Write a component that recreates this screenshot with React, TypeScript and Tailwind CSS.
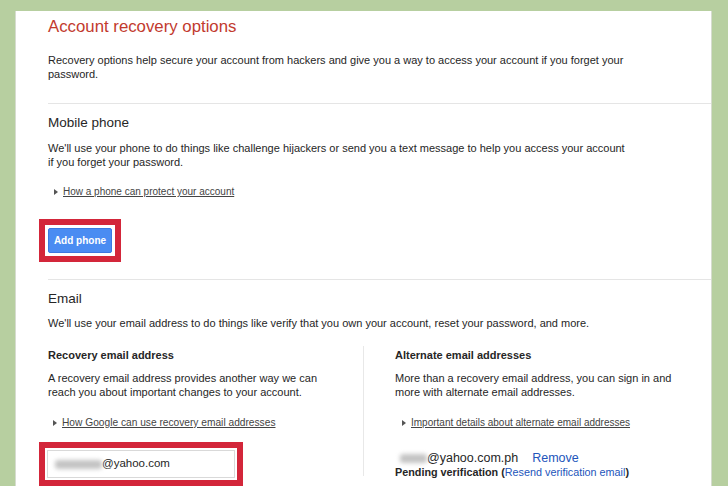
import React from "react";

const Tri = () => (
  <svg width="4" height="6" viewBox="0 0 4 6" className="mr-[5px] shrink-0">
    <path d="M0 0 L4 3 L0 6 Z" fill="#555" />
  </svg>
);

const Blur = ({ w }: { w: number }) => (
  <span
    className="inline-block h-[9px] rounded-[3px] bg-[#c4c4c4] blur-[2px] align-middle"
    style={{ width: w }}
  />
);

export default function App() {
  return (
    <div
      className="h-[486px] overflow-hidden bg-[#b7cfa0] pt-[11px] pl-[15px] pr-[16px]"
      style={{ fontFamily: '"Liberation Sans", Arial, sans-serif' }}
    >
      <div className="h-[480px] bg-white border-r border-l border-[#d6dccf] pl-[32px] pt-[6px] text-[#262626]">
        <h1 className="text-[16.8px] leading-[20px] text-[#c23a2e]">Account recovery options</h1>
        <p className="mt-[16px] text-[11px] leading-[14px]">
          Recovery options help secure your account from hackers and give you a way to access your account if you forget your
          <br />
          password.
        </p>
        <div className="mt-[22px] border-t border-[#e5e5e5]" />

        <h2 className="mt-[11px] text-[13.5px] leading-[16px]">Mobile phone</h2>
        <p className="mt-[10px] text-[11px] leading-[14px]">
          We'll use your phone to do things like challenge hijackers or send you a text message to help you access your account
          <br />
          if you forget your password.
        </p>
        <div className="mt-[16px] flex items-center pl-[6px] text-[10px] leading-[14px] text-[#444]">
          <Tri />
          <span className="underline">How a phone can protect your account</span>
        </div>
        <div className="mt-[20px] -ml-[9px] w-fit border-[6px] border-[#d3263a] bg-white p-[3px]">
          <button className="flex h-[25px] w-[64px] items-center justify-center rounded-[2px] border border-[#3b78e0] bg-[#4a8cf2] text-[10px] font-bold text-white">
            Add phone
          </button>
        </div>
        <div className="mt-[17px] border-t border-[#e5e5e5]" />

        <h2 className="mt-[11px] text-[13.5px] leading-[16px]">Email</h2>
        <p className="mt-[9px] text-[11px] leading-[14px]">
          We'll use your email address to do things like verify that you own your account, reset your password, and more.
        </p>

        <div className="mt-[16px] flex">
          <div className="w-[315px] pt-[2px]">
            <h3 className="text-[11px] font-bold leading-[14px]">Recovery email address</h3>
            <p className="mt-[9px] text-[11px] leading-[14px]">
              A recovery email address provides another way we can
              <br />
              reach you about important changes to your account.
            </p>
            <div className="mt-[17px] flex items-center pl-[5px] text-[10.2px] leading-[14px] text-[#444]">
              <Tri />
              <span className="underline">How Google can use recovery email addresses</span>
            </div>
            <div className="mt-[12px] -ml-[9px] w-fit border-[6px] border-[#d3263a] bg-white p-[2px]">
              <div className="flex h-[28px] w-[188px] items-center border border-[#d9d9d9] pl-[7px] text-[11.5px]">
                <Blur w={47} />
                <span>@yahoo.com</span>
              </div>
            </div>
          </div>
          <div className="h-[130px] border-l border-[#e8e8e8]" />
          <div className="pl-[31px] pt-[2px]">
            <h3 className="text-[11px] font-bold leading-[14px]">Alternate email addresses</h3>
            <p className="mt-[9px] text-[11px] leading-[14px]">
              More than a recovery email address, you can sign in and
              <br />
              more with alternate email addresses.
            </p>
            <div className="mt-[17px] flex items-center pl-[7px] text-[10px] leading-[14px] text-[#444]">
              <Tri />
              <span className="underline">Important details about alternate email addresses</span>
            </div>
            <div className="mt-[21px] flex items-center pl-[5px] text-[12.5px] leading-[14px]">
              <Blur w={27} />
              <span>@yahoo.com.ph</span>
              <span className="ml-[14px] text-[#2255bb]">Remove</span>
            </div>
            <div className="text-[10.8px] leading-[14px]">
              <span className="font-bold">Pending verification (</span>
              <span className="text-[#2255bb]">Resend verification email</span>
              <span className="font-bold">)</span>
            </div>
          </div>
        </div>
      </div>
    </div>
  );
}
